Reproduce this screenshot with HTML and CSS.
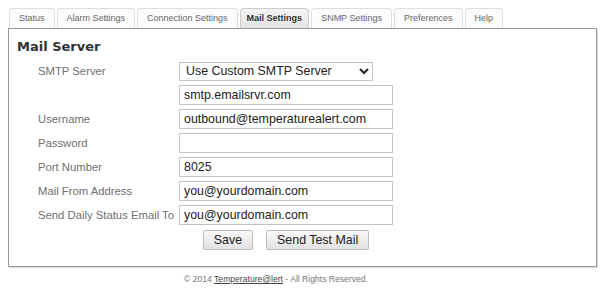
FILE: index.html
```html
<!DOCTYPE html>
<html lang="en">

<head>
    <meta charset="UTF-8">
    <meta name="viewport" content="width=device-width, initial-scale=1.0">
    <title>Mail Settings</title>
    <link rel="stylesheet" href="styles.css">
</head>

<body>
    <div class="page">
        <ul class="tabs">
            <li><a href="#">Status</a></li>
            <li><a href="#">Alarm Settings</a></li>
            <li><a href="#">Connection Settings</a></li>
            <li class="active"><a href="#">Mail Settings</a></li>
            <li><a href="#">SNMP Settings</a></li>
            <li><a href="#">Preferences</a></li>
            <li><a href="#">Help</a></li>
        </ul>
        <div class="panel">
            <h2>Mail Server</h2>
            <form class="settings">
                <label for="smtp">SMTP Server</label>
                <select id="smtp" class="smtp-select">
                    <option>Use Custom SMTP Server</option>
                </select>

                <span></span>
                <input type="text" value="smtp.emailsrvr.com">

                <label for="username">Username</label>
                <input type="text" id="username" value="outbound@temperaturealert.com">

                <label for="password">Password</label>
                <input type="password" id="password" value="">

                <label for="port">Port Number</label>
                <input type="text" id="port" value="8025">

                <label for="from">Mail From Address</label>
                <input type="text" id="from" value="you@yourdomain.com">

                <label for="daily">Send Daily Status Email To</label>
                <input type="text" id="daily" value="you@yourdomain.com">

                <span></span>
                <div class="actions">
                    <button type="button">Save</button>
                    <button type="button">Send Test Mail</button>
                </div>
            </form>
        </div>
        <footer>
            <p>&copy; 2014 <a href="#">Temperature@lert</a> - All Rights Reserved.</p>
        </footer>
    </div>
</body>

</html>
```

FILE: styles.css
```css
:root {
    --BodyFont: 'Liberation Sans', Arial, sans-serif;
    --HeadFont: 'DejaVu Sans', Verdana, sans-serif;
    --Border: #999;
}

body {
    font-family: var(--BodyFont);
    margin: 0;
    padding: 0;
    background-color: #fff;
}

.page {
    padding: 8px 11px 0 8px;
}

.tabs {
    list-style: none;
    margin: 0 0 0 1px;
    padding: 0;
    display: flex;
    gap: 2px;
}

.tabs li {
    border: 1px solid #ddd;
    border-bottom: none;
    border-radius: 4px 4px 0 0;
    background-color: #fcfcfc;
}

.tabs a {
    display: block;
    height: 19px;
    line-height: 19px;
    padding: 0 9px;
    font-size: 9px;
    color: #666;
    text-decoration: none;
}

.tabs li.active {
    background: linear-gradient(#f4f4f4, #e4e4e4);
    border-color: #ccc;
}

.tabs li.active a {
    color: #333;
    font-weight: bold;
    padding: 0 6px;
}

.panel {
    border: 1px solid var(--Border);
    box-shadow: 1px 1px 0 #ddd;
    padding: 0 8px 17px;
}

.panel h2 {
    font-family: var(--HeadFont);
    font-size: 13px;
    line-height: 16px;
    color: #333;
    margin: 10px 0 6px;
}

.settings {
    display: grid;
    grid-template-columns: 141px 214px;
    grid-auto-rows: 20px;
    row-gap: 4px;
    margin-left: 21px;
    align-items: center;
}

.settings label {
    font-size: 11.3px;
    color: #707070;
}

.settings input,
.settings select {
    box-sizing: border-box;
    height: 20px;
    margin: 0;
    border: 1px solid #c4c4c4;
    font-family: var(--BodyFont);
    font-size: 12.4px;
    color: #222;
    padding: 0 4px;
}

.settings select {
    width: 194px;
    height: 19px;
    padding: 0 2px;
    background-color: #fff;
}

.settings input {
    width: 214px;
}

.actions {
    display: flex;
    justify-content: center;
    gap: 13px;
    align-self: start;
    margin-top: 1px;
}

.actions button {
    font-family: var(--BodyFont);
    font-size: 12.4px;
    color: #222;
    height: 20px;
    padding: 0 10px;
    border: 1px solid #bbb;
    border-radius: 2px;
    background: linear-gradient(#f8f8f8, #e2e2e2);
    cursor: pointer;
}

footer {
    text-align: center;
    margin-top: 7px;
    padding-right: 53px;
}

footer p {
    margin: 0;
    font-size: 8.6px;
    line-height: 11px;
    color: #777;
}

footer a {
    color: #444;
    text-decoration: underline;
}
```
